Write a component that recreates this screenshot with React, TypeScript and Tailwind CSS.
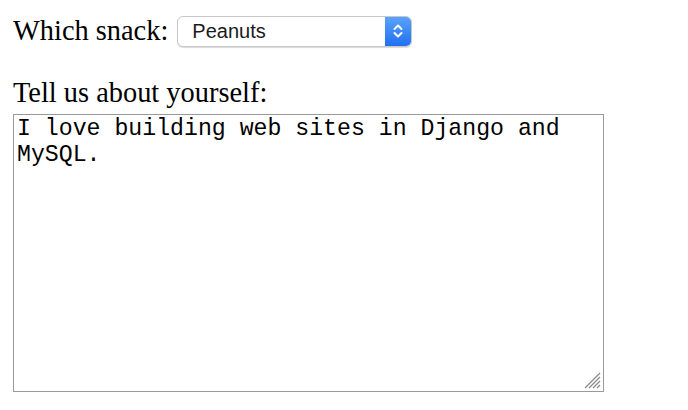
export default function App() {
  return (
    <div className="w-[688px] h-[410px] bg-white pl-[13px] pt-[13px]" style={{ fontFamily: '"Liberation Serif", serif' }}>
      <div className="flex items-center h-[36px]">
        <span className="text-[28.4px] leading-none text-black">Which snack:</span>
        <div className="ml-[9px] flex h-[31px] w-[235px] rounded-[6px] border border-[#c8c8c8] bg-white shadow-[0_1px_1px_rgba(0,0,0,0.15)] overflow-hidden">
          <div className="flex-1 flex items-center pl-[14px] text-[20px] text-[#1a1a1a]" style={{ fontFamily: '"Liberation Sans", Arial, sans-serif' }}>
            Peanuts
          </div>
          <div className="w-[26px] h-full flex items-center justify-center bg-gradient-to-b from-[#5aa2fb] to-[#1f6ff0]">
            <svg width="12" height="18" viewBox="0 0 12 18" fill="none" stroke="white" strokeWidth="2" strokeLinecap="round" strokeLinejoin="round">
              <path d="M2.5 7 L6 3.5 L9.5 7" />
              <path d="M2.5 11 L6 14.5 L9.5 11" />
            </svg>
          </div>
        </div>
      </div>
      <div className="mt-[30px] text-[28.4px] leading-none text-black">Tell us about yourself:</div>
      <div className="relative mt-[7px] w-[591px] h-[278px] border border-[#9a9a9a] bg-white">
        <div
          className="pl-[3px] pt-[1px] text-[23.2px] leading-[26px] text-black whitespace-pre-wrap"
          style={{ fontFamily: '"Liberation Mono", "Courier New", monospace' }}
        >
          {"I love building web sites in Django and\nMySQL."}
        </div>
        <svg className="absolute right-[2px] bottom-[2px]" width="22" height="22" viewBox="0 0 22 22" stroke="#8a8a8a" strokeWidth="1.2">
          <path d="M21 6 L6 21" />
          <path d="M21 10 L10 21" />
          <path d="M21 14 L14 21" />
          <path d="M21 18 L18 21" />
        </svg>
      </div>
    </div>
  );
}
